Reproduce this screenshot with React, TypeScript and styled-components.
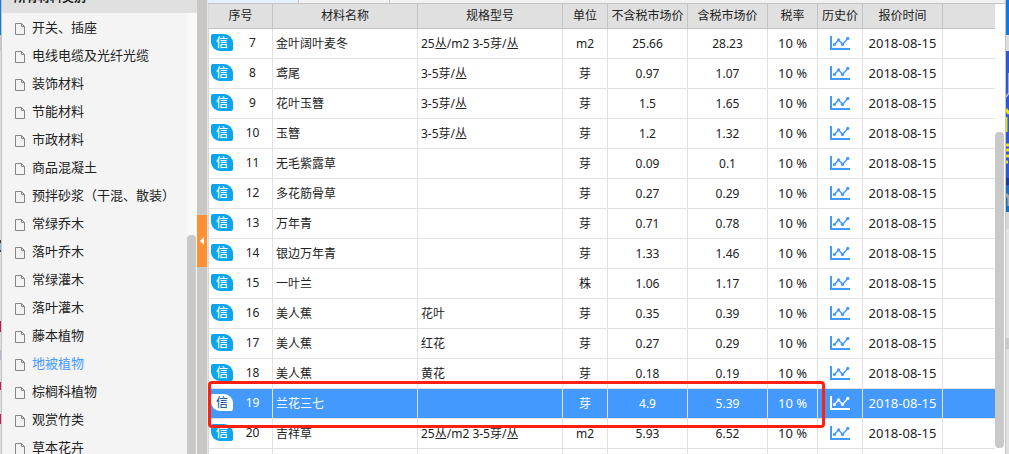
import React from "react";
import styled, { createGlobalStyle } from "styled-components";

const GlobalStyle = createGlobalStyle`
  *, *::before, *::after { box-sizing: border-box; }
  body {
    margin: 0;
    overflow: hidden;
    background: #e0e0e0;
    color: #222;
    font-family: "Noto Sans", "Noto Sans CJK SC", sans-serif;
    font-size: 12px;
  }
`;

const Page = styled.div`
  display: grid;
  grid-template-columns: 1px 196px 11px minmax(0, 1fr) 3px;
  height: 100vh;
  overflow: hidden;
`;

const LeftEdge = styled.div`
  background: linear-gradient(
    #0a7be8 35px, #c8c8c8 35px, #c8c8c8 51px, #dcdcdc 51px, #dcdcdc 240px,
    #444 240px, #444 243px, #8fb8e0 243px, #8fb8e0 250px, #444 250px, #444 252px,
    #dcdcdc 252px, #dcdcdc 321px, #c2185b 321px, #c2185b 332px,
    #dcdcdc 332px, #dcdcdc 350px, #c0b0dc 350px, #c0b0dc 360px,
    #dcdcdc 360px, #dcdcdc 382px, #c2185b 382px, #c2185b 390px,
    #dcdcdc 390px, #dcdcdc 414px, #c2185b 414px, #c2185b 424px, #dcdcdc 424px
  );
`;

const RightEdge = styled.div`
  overflow: hidden;
  background: linear-gradient(
    #0a7be8 35px, #dedede 35px, #dedede 51px, #3158d4 51px, #3158d4 212px,
    #d8d8d8 212px, #d8d8d8 229px, #e4e4e4 229px, #e4e4e4 338px,
    #cacaca 338px, #cacaca 349px, #e0e0e0 349px
  );
  svg { display: block; }
`;

const Sidebar = styled.aside`
  display: flex;
  flex-direction: column;
  min-height: 0;
  background: #f4f4f4;
  border-left: 1px solid #c6c6c6;
`;

const SidebarTitle = styled.h2`
  display: flex;
  flex: none;
  align-items: flex-end;
  height: 13px;
  margin: 0;
  padding: 0 12px 5px;
  overflow: hidden;
  background: #e0e0e0;
  font-size: 12px;
  font-weight: 700;
  line-height: 20px;
`;

const SidebarBody = styled.div`
  display: flex;
  flex: 1;
  min-height: 0;
`;

const CategoryList = styled.ul`
  flex: 1;
  margin: 0;
  padding: 0;
  overflow: hidden;
  list-style: none;
`;

const CategoryLink = styled.a<{ $active: boolean }>`
  display: flex;
  align-items: center;
  gap: 6px;
  height: 28px;
  padding-left: 12px;
  color: ${(p) => (p.$active ? "#4499ff" : "#222")};
  font-size: 13px;
  line-height: 28px;
  text-decoration: none;
  white-space: nowrap;
  svg { flex: none; margin-top: 4px; }
`;

const SidebarTrack = styled.div`
  display: flex;
  flex-direction: column;
  width: 10px;
  padding-right: 1px;
  background: #f9f9f9;
`;

const TableTrack = styled.div`
  display: flex;
  flex-direction: column;
  width: 10px;
  padding-right: 1px;
  background: #fff;
`;

const TrackSpace = styled.div<{ $share: number }>`
  flex: ${(p) => p.$share} 0 0;
`;

const Thumb = styled.div<{ $share: number; $openEnd?: boolean }>`
  flex: ${(p) => p.$share} 0 0;
  border-radius: ${(p) => (p.$openEnd ? "4px 4px 0 0" : "4px")};
  background: #c9c9c9;
`;

const Splitter = styled.div`
  display: flex;
  flex-direction: column;
  justify-content: center;
  padding-top: 28px;
  background: #c8c7c5;
  border-right: 1px solid #e6e6e6;
`;

const CollapseButton = styled.button`
  display: flex;
  align-items: center;
  justify-content: center;
  width: 100%;
  height: 52px;
  padding: 0;
  border: 0;
  background: #ff9033;
`;

const Main = styled.main`
  display: flex;
  flex-direction: column;
  min-width: 0;
  min-height: 0;
  background: #fff;
  border-right: 1px solid #c4c4c4;
`;

const TabStrip = styled.div`
  display: flex;
  flex: none;
  height: 4px;
  background: #f2f2f2;
  border-bottom: 1px solid #c4c4c4;
`;

const TabEdge = styled.div<{ $active?: boolean }>`
  width: 91px;
  background: ${(p) => (p.$active ? "#e2f0ff" : "#f2f2f2")};
  border-right: 1px solid #c4c4c4;
`;

const TableArea = styled.div`
  display: flex;
  flex: 1;
  min-height: 0;
`;

const TableView = styled.div`
  position: relative;
  flex: 1;
  min-width: 0;
  overflow: hidden;
`;

const PriceTable = styled.table`
  width: 100%;
  table-layout: fixed;
  border-collapse: separate;
  border-spacing: 0;
`;

const Column = styled.col<{ $width?: number }>`
  width: ${(p) => (p.$width ? `${p.$width}px` : "auto")};
`;

const HeadCell = styled.th`
  height: 25px;
  padding: 0;
  background: #e0e0e0;
  border-right: 1px solid #c4c4c4;
  border-bottom: 1px solid #c4c4c4;
  font-weight: 400;
  line-height: 20px;
  white-space: nowrap;
  &:first-child { border-left: 1px solid #d8d8d8; }
  &:last-child { border-right: 0; }
`;

const Row = styled.tr<{ $selected: boolean }>`
  background: ${(p) => (p.$selected ? "#4499ff" : "#fff")};
  color: ${(p) => (p.$selected ? "#fff" : "#222")};
`;

const Cell = styled.td<{ $left?: boolean; $raised?: boolean }>`
  height: 30px;
  padding: 0;
  padding-left: ${(p) => (p.$left ? "3px" : "0")};
  padding-bottom: ${(p) => (p.$raised ? "2px" : "0")};
  border-right: 1px solid #e2e2e2;
  border-bottom: 1px solid #e2e2e2;
  font-size: ${(p) => (p.$raised ? "13px" : "12px")};
  line-height: 20px;
  text-align: ${(p) => (p.$left ? "left" : "center")};
  white-space: nowrap;
  vertical-align: middle;
  &:first-child { border-left: 1px solid #d8d8d8; }
  &:last-child { border-right: 0; }
`;

const Serial = styled.div`
  display: flex;
  align-items: center;
  padding: 0 0 2px 2px;
`;

const SerialNumber = styled.span`
  flex: 1;
  text-align: center;
`;

const Badge = styled.span<{ $selected: boolean }>`
  display: flex;
  align-items: center;
  justify-content: center;
  width: 22px;
  height: 17px;
  border-radius: 2px 9px 2px 9px;
  background: ${(p) => (p.$selected ? "#fff" : "#0aa5ee")};
  color: ${(p) => (p.$selected ? "#2360b0" : "#fff")};
  font-size: 12px;
  font-weight: 500;
  line-height: 17px;
`;

const HistoryButton = styled.button<{ $selected: boolean }>`
  display: block;
  margin: 0 auto;
  padding: 0;
  border: 0;
  background: none;
  color: ${(p) => (p.$selected ? "#fff" : "#4499ff")};
  svg { display: block; }
`;

const Highlight = styled.div`
  position: absolute;
  top: 377px;
  left: 0;
  width: 617px;
  height: 47px;
  border: 3px solid #ff2010;
  border-radius: 4px;
  pointer-events: none;
`;

const FileIcon = () => (
  <svg width="12" height="13" viewBox="0 0 12 13" fill="none" stroke="#858585" aria-hidden="true">
    <path d="M1.5 0.5H7.5L10.5 3.5V11.5H1.5Z" />
    <path d="M7.5 0.5V3.5H10.5" />
  </svg>
);

const TrendIcon = () => (
  <svg width="20" height="14" viewBox="0 0 20 14" fill="none" stroke="currentColor" aria-hidden="true">
    <path d="M1 0V13H20" strokeWidth="2" />
    <path d="M4.2 8.7L8.6 3.8L12.5 8.4L18 2.3" strokeWidth="1.5" />
    <g fill="currentColor" stroke="none">
      <circle cx="4.4" cy="8.5" r="1.5" />
      <circle cx="8.6" cy="3.8" r="1.6" />
      <circle cx="12.5" cy="8.4" r="1.6" />
      <circle cx="17.8" cy="2.4" r="1.6" />
    </g>
  </svg>
);

const categories = [
  "开关、插座", "电线电缆及光纤光缆", "装饰材料", "节能材料", "市政材料", "商品混凝土",
  "预拌砂浆（干混、散装）", "常绿乔木", "落叶乔木", "常绿灌木", "落叶灌木", "藤本植物",
  "地被植物", "棕榈科植物", "观赏竹类", "草本花卉",
];

const columns: { title: string; width?: number }[] = [
  { title: "序号", width: 65 },
  { title: "材料名称", width: 145 },
  { title: "规格型号", width: 145 },
  { title: "单位", width: 45 },
  { title: "不含税市场价", width: 80 },
  { title: "含税市场价", width: 80 },
  { title: "税率", width: 50 },
  { title: "历史价", width: 45 },
  { title: "报价时间", width: 80 },
  { title: "" },
];

type Material = [number, string, string, string, string, string];

const materials: Material[] = [
  [7, "金叶阔叶麦冬", "25丛/m2 3-5芽/丛", "m2", "25.66", "28.23"],
  [8, "鸢尾", "3-5芽/丛", "芽", "0.97", "1.07"],
  [9, "花叶玉簪", "3-5芽/丛", "芽", "1.5", "1.65"],
  [10, "玉簪", "3-5芽/丛", "芽", "1.2", "1.32"],
  [11, "无毛紫露草", "", "芽", "0.09", "0.1"],
  [12, "多花筋骨草", "", "芽", "0.27", "0.29"],
  [13, "万年青", "", "芽", "0.71", "0.78"],
  [14, "银边万年青", "", "芽", "1.33", "1.46"],
  [15, "一叶兰", "", "株", "1.06", "1.17"],
  [16, "美人蕉", "花叶", "芽", "0.35", "0.39"],
  [17, "美人蕉", "红花", "芽", "0.27", "0.29"],
  [18, "美人蕉", "黄花", "芽", "0.18", "0.19"],
  [19, "兰花三七", "", "芽", "4.9", "5.39"],
  [20, "吉祥草", "25丛/m2 3-5芽/丛", "m2", "5.93", "6.52"],
];

const SELECTED = 19;

export default function App() {
  return (
    <>
      <GlobalStyle />
      <Page>
        <LeftEdge />
        <Sidebar>
          <SidebarTitle>所有材料类别</SidebarTitle>
          <SidebarBody>
            <CategoryList>
              {categories.map((name) => (
                <li key={name}>
                  <CategoryLink href="#" $active={name === "地被植物"}>
                    <FileIcon />
                    {name}
                  </CategoryLink>
                </li>
              ))}
            </CategoryList>
            <SidebarTrack>
              <TrackSpace $share={222} />
              <Thumb $share={219} $openEnd />
            </SidebarTrack>
          </SidebarBody>
        </Sidebar>
        <Splitter>
          <CollapseButton aria-label="收起">
            <svg width="4" height="8" viewBox="0 0 4 8" fill="#fff" aria-hidden="true">
              <path d="M4 0V8L0 4Z" />
            </svg>
          </CollapseButton>
        </Splitter>
        <Main>
          <TabStrip>
            <TabEdge $active />
            <TabEdge />
          </TabStrip>
          <TableArea>
            <TableView>
              <PriceTable>
                <colgroup>
                  {columns.map((c) => (
                    <Column key={c.title} $width={c.width} />
                  ))}
                </colgroup>
                <thead>
                  <tr>
                    {columns.map((c) => (
                      <HeadCell key={c.title} scope="col">{c.title}</HeadCell>
                    ))}
                  </tr>
                </thead>
                <tbody>
                  {materials.map(([id, name, spec, unit, net, gross]) => {
                    const selected = id === SELECTED;
                    return (
                      <Row key={id} $selected={selected}>
                        <Cell>
                          <Serial>
                            <Badge $selected={selected}>信</Badge>
                            <SerialNumber>{id}</SerialNumber>
                          </Serial>
                        </Cell>
                        <Cell $left>{name}</Cell>
                        <Cell $left>{spec}</Cell>
                        <Cell>{unit}</Cell>
                        <Cell>{net}</Cell>
                        <Cell>{gross}</Cell>
                        <Cell $raised>10 %</Cell>
                        <Cell $raised>
                          <HistoryButton $selected={selected} aria-label="历史价">
                            <TrendIcon />
                          </HistoryButton>
                        </Cell>
                        <Cell $raised>2018-08-15</Cell>
                        <Cell />
                      </Row>
                    );
                  })}
                  <Row $selected={false}>
                    {columns.map((c) => (
                      <Cell key={c.title} />
                    ))}
                  </Row>
                </tbody>
              </PriceTable>
              <Highlight />
            </TableView>
            <TableTrack>
              <TrackSpace $share={128} />
              <Thumb $share={316} />
              <TrackSpace $share={6} />
            </TableTrack>
          </TableArea>
        </Main>
        <RightEdge>
          <svg width="3" height="212" viewBox="0 0 3 212" fill="none" aria-hidden="true">
            <path d="M0 97L3 93V73" stroke="#c8c8d8" strokeWidth="1.5" />
            <path d="M0 109L3 114M0 117V132" stroke="#e8e800" strokeWidth="3" />
            <path d="M0 145H3M0 150H3M0 156H3M0 162H2" stroke="#e8e020" strokeWidth="3" />
            <path d="M0 178H3V185H0Z" fill="#1c3a9c" />
            <path d="M0 186H3V212H0Z" fill="#1672bc" />
            <path d="M0 194L3 198V206" stroke="#a8a8a8" strokeWidth="3" />
          </svg>
        </RightEdge>
      </Page>
    </>
  );
}
